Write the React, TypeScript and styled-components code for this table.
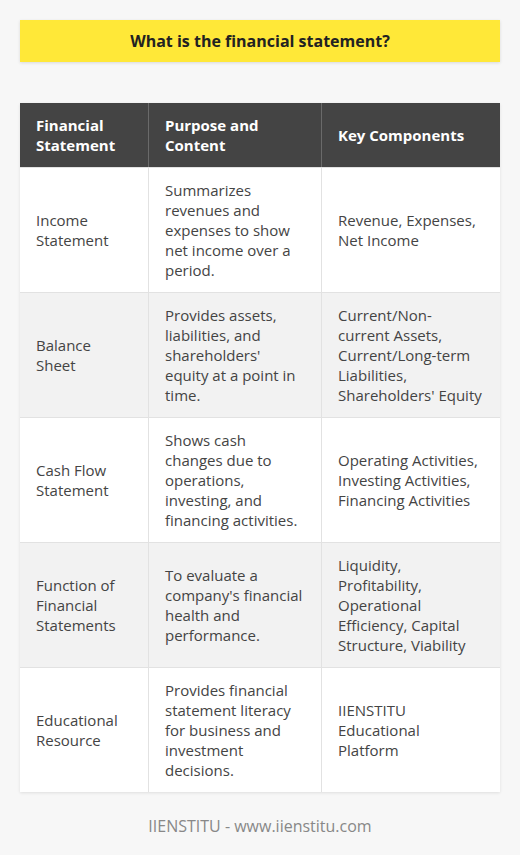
import React from "react";
import styled, { createGlobalStyle } from "styled-components";

const Global = createGlobalStyle`
  html, body { margin: 0; padding: 0; background: #f7f7f7; }
  body { font-family: "Open Sans", "Liberation Sans", sans-serif; }
`;

const Page = styled.div`
  width: 520px;
  min-height: 855px;
  box-sizing: border-box;
  padding: 20px 20px 0;
  display: flex;
  flex-direction: column;
`;

const TitleBar = styled.div`
  height: 42px;
  background: #ffe838;
  box-shadow: 0 1px 3px rgba(0, 0, 0, 0.12);
  display: flex;
  align-items: center;
  justify-content: center;
  font-size: 16px;
  font-weight: 700;
  color: #222;
`;

const Table = styled.div`
  margin-top: 41px;
  display: grid;
  grid-template-columns: 129px 173px 178px;
  background: #fff;
  box-shadow: 0 1px 3px rgba(0, 0, 0, 0.1);
`;

const HeadCell = styled.div<{ $last?: boolean }>`
  background: #444;
  color: #fff;
  font-weight: 700;
  font-size: 15px;
  line-height: 20px;
  padding: 12px 16px;
  min-height: 40px;
  display: flex;
  align-items: center;
  border-right: ${(p) => (p.$last ? "none" : "1px solid #6a6a6a")};
`;

const Cell = styled.div<{ $alt: boolean; $last?: boolean }>`
  background: ${(p) => (p.$alt ? "#f2f2f2" : "#fff")};
  color: #444;
  font-size: 15px;
  line-height: 20px;
  padding: 12px ${(p) => (p.$last ? "17.5px" : "15px")} 12px 16px;
  min-height: 100px;
  display: flex;
  align-items: center;
  border-top: 1px solid #e2e2e2;
  border-right: ${(p) => (p.$last ? "none" : "1px solid #e2e2e2")};
`;

const Footer = styled.div`
  text-align: center;
  color: #888;
  font-size: 16px;
  margin-top: 23px;
`;

const rows: [string, string, string][] = [
  [
    "Income Statement",
    "Summarizes revenues and expenses to show net income over a period.",
    "Revenue, Expenses, Net Income",
  ],
  [
    "Balance Sheet",
    "Provides assets, liabilities, and shareholders' equity at a point in time.",
    "Current/Non-current Assets, Current/Long-term Liabilities, Shareholders' Equity",
  ],
  [
    "Cash Flow Statement",
    "Shows cash changes due to operations, investing, and financing activities.",
    "Operating Activities, Investing Activities, Financing Activities",
  ],
  [
    "Function of Financial Statements",
    "To evaluate a company's financial health and performance.",
    "Liquidity, Profitability, Operational Efficiency, Capital Structure, Viability",
  ],
  [
    "Educational Resource",
    "Provides financial statement literacy for business and investment decisions.",
    "IIENSTITU Educational Platform",
  ],
];

export default function App() {
  return (
    <>
      <Global />
      <Page>
        <TitleBar>What is the financial statement?</TitleBar>
        <Table>
          <HeadCell>Financial Statement</HeadCell>
          <HeadCell>Purpose and Content</HeadCell>
          <HeadCell $last>Key Components</HeadCell>
          {rows.map((r, i) => (
            <React.Fragment key={i}>
              <Cell $alt={i % 2 === 1}>{r[0]}</Cell>
              <Cell $alt={i % 2 === 1}>{r[1]}</Cell>
              <Cell $alt={i % 2 === 1} $last>
                {r[2]}
              </Cell>
            </React.Fragment>
          ))}
        </Table>
        <Footer>IIENSTITU - www.iienstitu.com</Footer>
      </Page>
    </>
  );
}
